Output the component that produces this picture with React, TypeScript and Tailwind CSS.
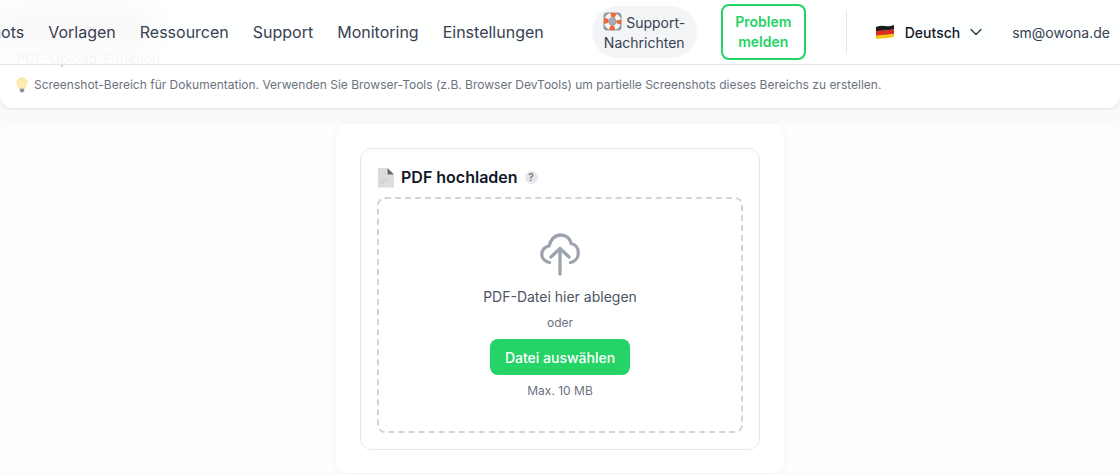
const navItems = ['Screenshots', 'Vorlagen', 'Ressourcen', 'Support', 'Monitoring', 'Einstellungen']

function Lifebuoy() {
  return (
    <svg viewBox="0 0 20 20" className="mr-[4px] inline-block h-[19px] w-[19px] align-[-3px]">
      <rect x="0.500" y="0.500" width="19" height="19" rx="4" fill="#8f959e" />
      <circle cx="10" cy="10" r="6.800" fill="none" stroke="#f7f7f7" strokeWidth="4.800" />
      <circle cx="10" cy="10" r="6.800" fill="none" stroke="#ee6a35" strokeWidth="4.800" strokeDasharray="5.300 5.380" strokeDashoffset="2.650" />
      <circle cx="10" cy="10" r="3.600" fill="#a8adb5" />
    </svg>
  )
}

function Flag() {
  return (
    <svg viewBox="0 0 20 16" className="h-[16px] w-[20px]">
      <path d="M1 3 Q6 1 10 2 T19 1 V5.500 Q14 6 10 6.500 T1 7.500Z" fill="#1c1c1c" />
      <path d="M1 7.200 Q6 6 10 6.200 T19 5.200 V10 Q14 10.500 10 11 T1 12Z" fill="#dd2c1f" />
      <path d="M1 11.800 Q6 10.500 10 10.800 T19 9.800 V13 Q14 14 10 14.200 T1 15Z" fill="#f5c518" />
    </svg>
  )
}

function Bulb() {
  return (
    <svg viewBox="0 0 12 16" className="h-[16px] w-[12px] shrink-0">
      <path d="M6 .8C3 .8 1 3 1 5.600c0 2.400 2 3.600 2.600 6h4.800C9 9.200 11 8 11 5.600 11 3 9 .8 6 .8Z" fill="#fdeeb0" stroke="#f7dc85" strokeWidth=".7" />
      <path d="M3.800 11.800h4.400v2.200L6.800 15.400H5.200L3.800 14Z" fill="#8b8f98" />
    </svg>
  )
}

function FileIcon() {
  return (
    <svg viewBox="0 0 18 21" className="h-[21px] w-[18px] shrink-0">
      <path d="M1 1h9.500v6.500H17V20.500H1Z" fill="#dcdcdc" />
      <path d="M10.500 1 17 7.500h-6.500Z" fill="#666666" />
      <path d="M3 13h8M3 16h5" stroke="#c9c9c9" strokeWidth="1" />
    </svg>
  )
}

function UploadCloud() {
  return (
    <svg viewBox="0 0 40 44" className="h-[44px] w-[40px]" fill="none" stroke="#9ca3af" strokeWidth="3.300" strokeLinecap="round" strokeLinejoin="round">
      <path d="M20 42V17" />
      <path d="M11 25 20 16.500 29 25" />
      <path d="M9.500 30.500C4.800 29.500 1.800 26.200 1.800 22.200 1.800 18 5 14.500 9.300 13.800 10.300 7.500 15 3 20.800 3 26 3 30 6.500 31.200 11.500 35.500 12.500 38.300 16.200 38.300 20.800 38.300 25.500 35.300 29.500 30.500 30.500" />
    </svg>
  )
}

export default function App() {
  return (
    <div className="h-[474px] w-[1120px] overflow-hidden bg-[#f9fafb] font-['Inter',sans-serif]">
      {/* Header */}
      <header className="relative z-10 h-[65px] overflow-hidden border-b border-[#e5e7eb] bg-white/90">
        <div className="absolute left-0 top-[12px] h-[32px] w-[150px] bg-[#f6f6f7] blur-lg" />
        <div className="relative flex h-[64px] items-center justify-end pr-[10px]">
          <nav className="flex shrink-0 items-center gap-[24px] text-[16px] text-[#374151]">
            {navItems.map(item => (
              <span key={item} className="shrink-0">{item}</span>
            ))}
          </nav>
          <div className="ml-[48px] flex h-[52px] w-[105px] shrink-0 items-center justify-center rounded-[26px] bg-[#f3f4f6] text-center text-[14px] leading-[20px] text-[#374151]">
            <span><Lifebuoy />Support-<br />Nachrichten</span>
          </div>
          <div className="ml-[24px] flex h-[56px] w-[85px] shrink-0 items-center justify-center rounded-[8px] border-2 border-[#25d366] text-center text-[14px] font-semibold leading-[20px] text-[#25d366]">
            Problem<br />melden
          </div>
          <div className="ml-[40px] h-[44px] w-px shrink-0 bg-[#e5e7eb]" />
          <div className="ml-[28px] flex shrink-0 items-center">
            <Flag />
            <span className="ml-[10px] text-[14px] font-medium text-[#111827]">Deutsch</span>
            <svg viewBox="0 0 14 8" className="ml-[9px] h-[8px] w-[14px]" fill="none" stroke="#374151" strokeWidth="1.500" strokeLinecap="round" strokeLinejoin="round">
              <path d="M2 1.500 7 6.500 12 1.500" />
            </svg>
          </div>
          <span className="ml-[29px] shrink-0 text-[14px] text-[#374151]">sm@owona.de</span>
        </div>
      </header>

      {/* Hinweis */}
      <div className="relative flex h-[43px] items-center gap-[6px] rounded-b-xl bg-white pl-[16px] pb-[4px] text-[12px] text-[#6b7280] shadow-[0_1px_3px_rgba(0,0,0,0.1)]">
        <div className="absolute left-[16px] top-[-15px] text-[14px] leading-[18px] text-[#9ca3af]">PDF-Upload-Funktion</div>
        <Bulb />
        <span>Screenshot-Bereich für Dokumentation. Verwenden Sie Browser-Tools (z.B. Browser DevTools) um partielle Screenshots dieses Bereichs zu erstellen.</span>
      </div>

      {/* Inhalt */}
      <div className="mt-[16px] flex justify-center rounded-t-xl bg-[#fefefe]">
        <div className="h-[349px] w-[448px] rounded-xl bg-white p-[24px] shadow-[0_0_8px_rgba(0,0,0,0.05)]">
          <div className="flex h-[302px] flex-col rounded-xl border border-[#e5e7eb] px-[16px] pt-[12px]">
            <div className="mb-[4px] flex h-[32px] items-center">
              <FileIcon />
              <span className="ml-[6px] text-[16px] font-semibold text-[#111827]">PDF hochladen</span>
              <span className="ml-[7px] flex h-[13px] w-[13px] items-center justify-center rounded-full bg-[#e5e7eb] text-[10px] font-semibold text-[#6b7280]">?</span>
            </div>
            <div className="flex h-[236px] flex-col items-center rounded-lg border-2 border-dashed border-[#d1d5db] pt-[33px]">
              <UploadCloud />
              <p className="mt-[11px] text-[14px] leading-[20px] text-[#4b5563]">PDF-Datei hier ablegen</p>
              <p className="mt-[8px] text-[12px] leading-[16px] text-[#6b7280]">oder</p>
              <div className="mt-[8px] flex h-[36px] w-[140px] items-center justify-center rounded-lg bg-[#25d366] text-[14px] font-medium text-white">Datei auswählen</div>
              <p className="mt-[8px] text-[12px] leading-[16px] text-[#6b7280]">Max. 10 MB</p>
            </div>
          </div>
        </div>
      </div>
    </div>
  )
}
